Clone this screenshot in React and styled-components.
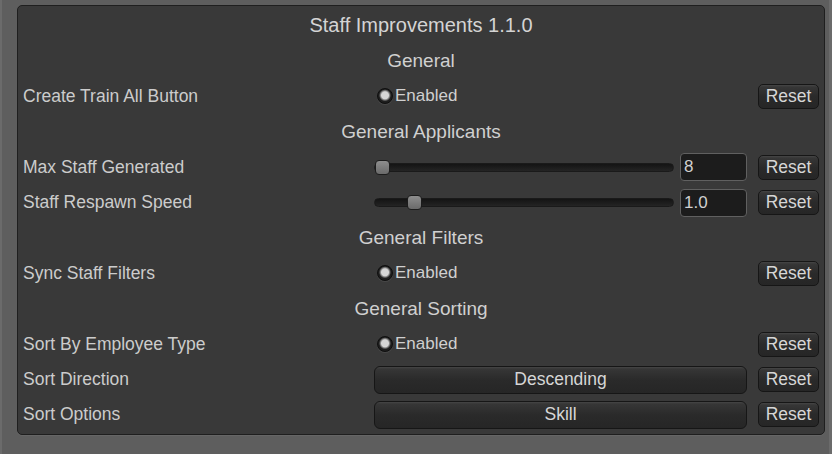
import React from "react";
import styled, { createGlobalStyle } from "styled-components";

const GlobalStyle = createGlobalStyle`
  html, body {
    margin: 0;
    padding: 0;
    background: #5e5e5e;
  }
  body {
    font-family: "Liberation Sans", Arial, sans-serif;
  }
`;

const Window = styled.div`
  box-sizing: border-box;
  width: 832px;
  height: 454px;
  padding: 5px 4px 19px 15px;
  background: #5e5e5e;
  border-left: 2px solid #6b6b6b;
  border-right: 3px solid #6b6b6b;
`;

const Panel = styled.div`
  box-sizing: border-box;
  height: 430px;
  background: #393939;
  border: 1px solid #1f1f1f;
  border-radius: 5px;
  box-shadow: 0 1px 0 rgba(255, 255, 255, 0.05);
  padding: 2px 5px 0 5px;
  display: grid;
  grid-template-columns: 340px 373px 61px;
  grid-auto-rows: 35.4px;
  column-gap: 11px;
  align-items: center;
  color: #d0d0d0;
`;

const Title = styled.div`
  grid-column: 1 / -1;
  text-align: center;
  font-size: 20px;
  color: #d4d4d4;
`;

const Header = styled.div`
  grid-column: 1 / -1;
  text-align: center;
  font-size: 19px;
  color: #d0d0d0;
`;

const Label = styled.div`
  font-size: 17.5px;
  color: #cccccc;
  white-space: nowrap;
`;

const Toggle = styled.div`
  display: flex;
  align-items: center;
  gap: 2px;
  padding-left: 3px;
  font-size: 17px;
  color: #d0d0d0;
`;

const Radio = styled.span`
  box-sizing: border-box;
  width: 16px;
  height: 16px;
  border-radius: 50%;
  background: radial-gradient(circle at 50% 45%, #d6d6d6 0 3.5px, #8a8a8a 4.5px, #1e1e1e 6px);
  border: 1px solid #0e0e0e;
  box-shadow: 0 1px 0 rgba(255, 255, 255, 0.08);
`;

const SliderWrap = styled.div`
  display: flex;
  align-items: center;
  gap: 6px;
`;

const Track = styled.div`
  position: relative;
  flex: 0 0 300px;
  height: 9px;
  border-radius: 5px;
  background: linear-gradient(#141414, #242424);
  border: 1px solid #1a1a1a;
  box-sizing: border-box;
`;

const Thumb = styled.div`
  position: absolute;
  top: -4px;
  box-sizing: border-box;
  width: 15px;
  height: 15px;
  border-radius: 4px;
  background: linear-gradient(#8e8e8e, #6a6a6a);
  border: 1px solid #1c1c1c;
`;

const Field = styled.div`
  box-sizing: border-box;
  flex: 0 0 67px;
  height: 28px;
  border-radius: 4px;
  background: #1c1c1c;
  border: 1px solid #606060;
  font-size: 17px;
  color: #d0d0d0;
  display: flex;
  align-items: center;
  padding-left: 3px;
`;

const Button = styled.div`
  box-sizing: border-box;
  height: ${(p) => (p.$wide ? 28 : 25)}px;
  border-radius: ${(p) => (p.$wide ? 6 : 5)}px;
  background: linear-gradient(#464646 0, #363636 2px, #2a2a2a 50%, #262626 100%);
  border: 1px solid #161616;
  color: #d6d6d6;
  font-size: 17.5px;
  display: flex;
  align-items: center;
  justify-content: center;
  width: ${(p) => (p.$wide ? "373px" : "61px")};
`;

function Slider({ value, min, max, text }) {
  const left = ((value - min) / (max - min)) * 285;
  return (
    <SliderWrap>
      <Track>
        <Thumb style={{ left: left + "px" }} />
      </Track>
      <Field>{text}</Field>
    </SliderWrap>
  );
}

function ToggleRow({ label }) {
  return (
    <>
      <Label>{label}</Label>
      <Toggle>
        <Radio />
        Enabled
      </Toggle>
      <Button>Reset</Button>
    </>
  );
}

export default function App() {
  return (
    <>
      <GlobalStyle />
      <Window>
        <Panel>
          <Title>Staff Improvements 1.1.0</Title>
          <Header>General</Header>
          <ToggleRow label="Create Train All Button" />
          <Header>General Applicants</Header>
          <Label>Max Staff Generated</Label>
          <Slider value={8} min={8} max={100} text="8" />
          <Button>Reset</Button>
          <Label>Staff Respawn Speed</Label>
          <Slider value={1.0} min={0.1} max={8.1} text="1.0" />
          <Button>Reset</Button>
          <Header>General Filters</Header>
          <ToggleRow label="Sync Staff Filters" />
          <Header>General Sorting</Header>
          <ToggleRow label="Sort By Employee Type" />
          <Label>Sort Direction</Label>
          <Button $wide>Descending</Button>
          <Button>Reset</Button>
          <Label>Sort Options</Label>
          <Button $wide>Skill</Button>
          <Button>Reset</Button>
        </Panel>
      </Window>
    </>
  );
}
